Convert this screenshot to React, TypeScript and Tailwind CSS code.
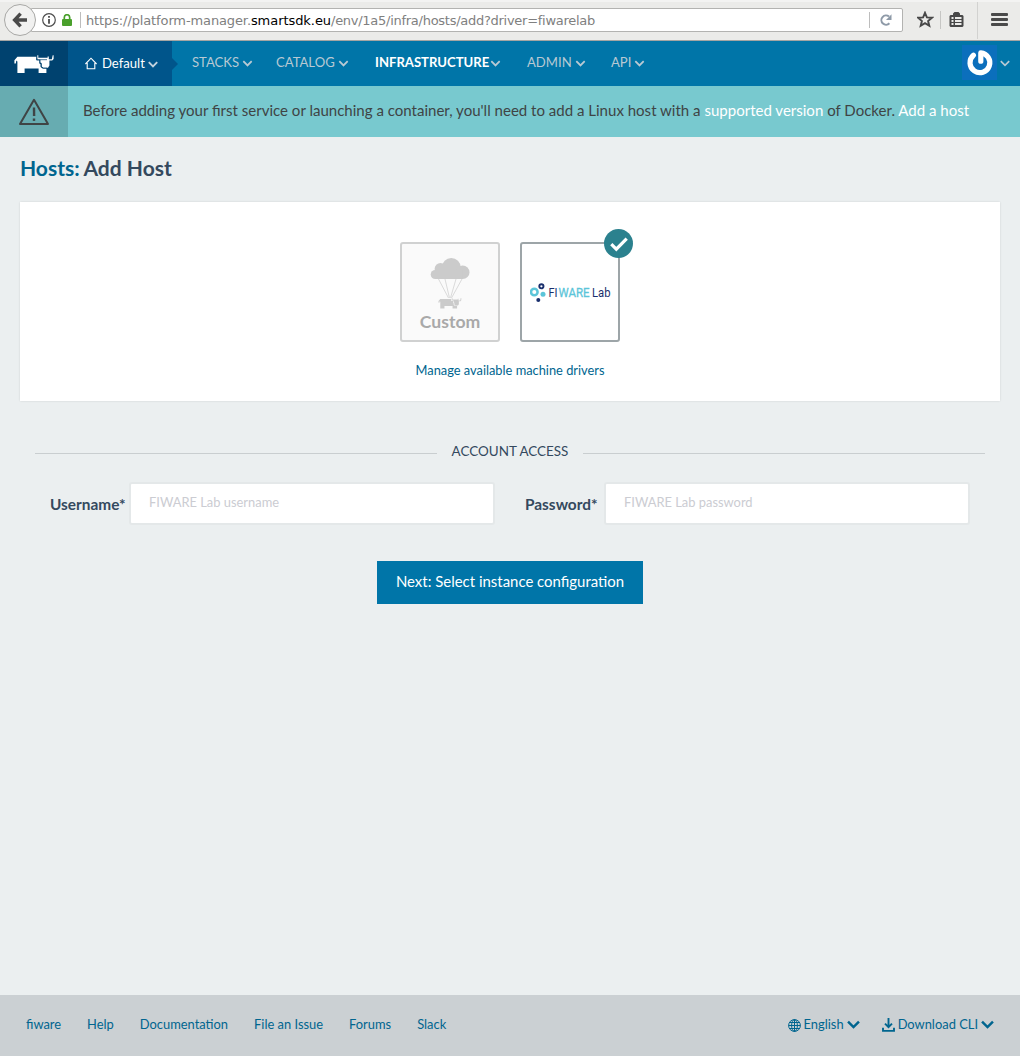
import React from "react";

const Caret = ({ className = "", w = 10, sw = 1.9 }: { className?: string; w?: number; sw?: number }) => (
  <svg className={className} width={w} height={w * 0.7} viewBox="0 0 10 7" fill="none" stroke="currentColor" strokeWidth={sw}>
    <path d="M.8 1.2 5 5.4 9.2 1.2" />
  </svg>
);

const CowShape = () => (
  <>
    <path d="M3.4 1.7H22.3V5.2H25.4V8.6L26.6 9V12L28.6 13.4H32.4V18H24.6V13.6H10.6V18H3.4V6.4L2.3 5.6 1.8 8.4H.4V5.2Z" />
    <path d="M23.3.2H24.3V2.8H33.6V1.4H34.8V4.2H37.8L38.7.2H39.6V4L38.2 5.6H35.4V10.6L34 12.8H29.4L27.6 11.4V8L26.2 7.6V4.4H23.3Z" />
  </>
);

const NavItem = ({ label, className }: { label: string; className: string }) => (
  <div className={"flex items-center whitespace-nowrap " + className}>
    <span>{label}</span>
    <Caret className="ml-[3px] mt-[3px]" w={10} />
  </div>
);

function BrowserBar() {
  return (
    <div className="flex h-[41px] shrink-0 items-start border-b border-[#a5a5a3] border-t-2 border-t-[#f3f3f2] bg-[#ebebe9] pl-1">
      <div className="z-10 mt-[2px] flex h-8 w-8 items-center justify-center rounded-full border border-[#a8a8a6] bg-[#f1f1f0]">
        <svg width="16" height="16" viewBox="0 0 16 16" fill="none" stroke="#4a4a4a" strokeWidth="3.4">
          <path d="M8.6 1.6 2.6 8l6 6.4M3 8h12" />
        </svg>
      </div>
      <div className="-ml-[5px] mt-[6px] flex h-6 w-[872px] items-center rounded-r-[2px] border border-[#b3b3b1] bg-white pl-[10px]">
        <svg width="14" height="14" viewBox="0 0 14 14" fill="none" stroke="#4c4c4c">
          <circle cx="7" cy="7" r="6.3" strokeWidth="1.2" />
          <path d="M7 3v1.8M7 6v4.8" strokeWidth="1.8" />
        </svg>
        <svg className="ml-[6px]" width="10" height="12" viewBox="0 0 10 12">
          <path d="M2.3 6V3.4a2.7 2.7 0 0 1 5.4 0V6" fill="none" stroke="#4aa02c" strokeWidth="1.7" />
          <rect y="5" width="10" height="7" rx="1" fill="#4aa02c" />
        </svg>
        <div className="ml-2 h-4 w-px bg-[#bdbdbd]" />
        <div className="ml-[5px] w-[783px] whitespace-nowrap pt-px font-['DejaVu_Sans',sans-serif] text-[13px] leading-5 tracking-[-0.12px] text-[#808080]">
          https://platform-manager.<span className="tracking-[-0.06px] text-black">smartsdk.eu</span><span className="tracking-[-0.27px]">/env/1a5/infra/hosts/add?driver=fiwarelab</span>
        </div>
        <div className="h-4 w-px bg-[#bdbdbd]" />
        <svg className="ml-[10px]" width="12" height="12" viewBox="0 0 12 12" fill="none" stroke="#8e9aa8" strokeWidth="2">
          <path d="M9.4 9.2A4.6 4.6 0 1 1 9 2.6" />
          <path d="M11.5.3V6H6Z" fill="#8e9aa8" stroke="none" />
        </svg>
      </div>
      <svg className="ml-[14px] mt-[9px]" width="17" height="17" viewBox="0 0 17 17" fill="none" stroke="#484848" strokeWidth="1.9">
        <path d="m8 1.8 1.9 4.6 5 .3-3.8 3.3 1.2 4.8L8 12.2l-4.3 2.6L4.9 10 1.1 6.7l5-.3Z" />
      </svg>
      <div className="ml-[6px] mt-[9px] h-[18px] w-px bg-[#c6c6c4]" />
      <svg className="ml-2 mt-[10px]" width="15" height="16" viewBox="0 0 15 16">
        <path d="M4 3V1.5L5.500 0h4L11 1.500V3H13.500l1 1v10l-1 1H1.500L.5 14V4l1-1Z" fill="#484848" />
        <path d="M2.500 6h2M6 6h6.500M2.500 9h2M6 9h6.500M2.500 12h2M6 12h6.500" stroke="#ebebe9" strokeWidth="1.800" />
      </svg>
      <div className="ml-[13px] h-[37px] w-px bg-[#d2d2d0]" />
      <svg className="ml-[13px] mt-[11px]" width="17" height="13" viewBox="0 0 17 13" fill="#4a4a4a">
        <rect width="17" height="3" rx="1" /><rect y="5" width="17" height="3" rx="1" /><rect y="10" width="17" height="3" rx="1" />
      </svg>
    </div>
  );
}

function Header() {
  return (
    <header className="flex h-[45px] shrink-0 bg-[#0075a8] text-[13.1px] leading-5 text-[#b8c9d3]">
      <div className="w-[68px] bg-[#00426f] pl-[14px] pt-[14px]">
        <svg width="41" height="19" viewBox="0 0 41 19" fill="#fff">
          <CowShape />
          <path d="M22.800 2.500V4.900H25.900V8.300L27.200 8.900V11.600L29.200 13.200H33M26 4.700H33" fill="none" stroke="#00426f" strokeWidth=".7" />
        </svg>
      </div>
      <div className="flex w-[104px] items-center bg-[#00558b] pl-[17px] text-white">
        <svg width="12" height="13" viewBox="0 0 12 13" fill="none" stroke="currentColor" strokeWidth="1.1">
          <path d="M.4 7 6 1.2 11.6 7M2.2 6v5.8h7.6V6" />
        </svg>
        <span className="-mt-[1px] ml-[5px]">Default</span>
        <Caret className="ml-[3px] mt-[2px] text-[#c3d2de]" />
      </div>
      <svg className="mt-[17px]" width="6" height="12" viewBox="0 0 6 12"><path d="M0 0 6 6 0 12Z" fill="#00558b" /></svg>
      <nav className="flex flex-1 pb-[3px] pl-[14px] [&_svg]:translate-x-[0.5px]">
        <NavItem label="STACKS" className="w-[84px]" />
        <NavItem label="CATALOG" className="w-[99px]" />
        <NavItem label="INFRASTRUCTURE" className="w-[152px] font-bold text-white [&>svg]:ml-[1px] [&>svg]:text-[#b8c9d3]" />
        <NavItem label="ADMIN" className="w-[84px]" />
        <NavItem label="API" className="w-[60px]" />
      </nav>
      <div className="mr-[10px] flex items-center">
        <svg className="mb-[3px]" width="35" height="35" viewBox="0 0 35 35" fill="none">
          <rect width="35" height="35" fill="#0b6fbc" />
          <path d="M11.400 10.300A9.900 9.900 0 1 0 18.800 7.900V16.200" stroke="#fff" strokeWidth="5.200" strokeLinecap="round" strokeLinejoin="round" />
        </svg>
        <Caret className="ml-[3px]" w={10} sw={1.7} />
      </div>
    </header>
  );
}

const DriverCustom = () => (
  <div className="flex h-[100px] w-[100px] flex-col items-center rounded-[3px] border-2 border-[#d0d1d1] bg-[#fafafa]">
    <svg className="mt-[13px]" width="40" height="54" viewBox="0 0 40 54" fill="#cbcbcb">
      <circle cx="5.200" cy="17.500" r="4.500" />
      <circle cx="10.500" cy="11.800" r="5.900" />
      <circle cx="21.300" cy="10.300" r="9.400" />
      <circle cx="32.700" cy="15.200" r="6.800" />
      <path d="M5.200 13H32.700V22H5.200Z" />
      <path d="M8.500 22 18.500 41M15 22 19.500 41M26 22 20.500 41M32 22 21.500 41" stroke="#cbcbcb" fill="none" strokeWidth=".7" />
      <g transform="translate(8.300 41) scale(.58)"><CowShape /></g>
    </svg>
    <span className="mt-[1px] text-[17.600px] font-bold leading-[20px] text-[#a9a9a9]">Custom</span>
  </div>
);

const DriverFiware = () => (
  <div className="relative flex h-[100px] w-[100px] rounded-[3px] border-2 border-[#9da5a8] bg-white">
    <svg className="ml-2 mt-[38px]" width="82" height="22" viewBox="0 0 82 22">
      <g fill="none">
        <circle cx="4.300" cy="10" r="3.300" stroke="#5cc5d9" strokeWidth="2.500" />
        <circle cx="11.400" cy="4.300" r="2.100" stroke="#1a2f6d" strokeWidth="1.900" />
      </g>
      <circle cx="13" cy="12.200" r="2.500" fill="#5cc5d9" />
      <circle cx="8.300" cy="17.900" r="2" fill="#1a2f6d" />
      <g fontFamily="Roboto, sans-serif" fontSize="12.500">
        <text x="18.500" y="15" fill="#1a2f6d" textLength="9" lengthAdjust="spacingAndGlyphs">FI</text>
        <text x="28.500" y="15" fill="#5cc5d9" stroke="#5cc5d9" strokeWidth=".3" textLength="31" lengthAdjust="spacingAndGlyphs">WARE</text>
        <text x="62" y="15" fill="#1a2f6d" textLength="18.500" lengthAdjust="spacingAndGlyphs">Lab</text>
      </g>
    </svg>
    <svg className="absolute -right-[15px] -top-[15px]" width="29" height="29" viewBox="0 0 29 29">
      <circle cx="14.5" cy="14.5" r="14.5" fill="#2b818e" />
      <path d="m7.300 15.200 5 5 10.400-10.600" fill="none" stroke="#fff" strokeWidth="3.200" />
    </svg>
  </div>
);

const Field = ({ label, placeholder }: { label: string; placeholder: string }) => (
  <label className="flex w-[475px] items-center pl-[15px]">
    <span className="w-[79px] text-[15.400px] font-bold leading-5">{label}*</span>
    <input
      placeholder={placeholder}
      className="h-[43px] w-[366px] rounded-[3px] border-2 border-[#e4e8e9] bg-white pb-[4px] pl-[18px] text-[12.900px] placeholder:text-[#cbccd2]"
    />
  </label>
);

export default function App() {
  return (
    <div className="flex h-[1056px] w-[1020px] flex-col overflow-hidden bg-[#ebeff0] font-['Lato',sans-serif] text-[#34495e]">
      <BrowserBar />
      <Header />
      <div className="flex h-[51px] shrink-0 bg-[#78c9cf]">
        <div className="flex w-[68px] items-center justify-center bg-[#67acb1]">
          <svg width="32" height="28" viewBox="0 0 32 28" fill="none" stroke="#3f4445" strokeWidth="2" strokeLinejoin="round">
            <path d="M16 1.8 30 26H2Z" />
            <path d="m16 9.5.1 8.5" strokeWidth="2.4" /><path d="M16 20.5v2.4" strokeWidth="2.4" />
          </svg>
        </div>
        <p className="whitespace-nowrap pl-[15px] pt-[14px] text-[15.040px] leading-5 text-[#3f4445]">
          Before adding your first service or launching a container, you'll need to add a Linux host with a <span className="text-white">supported version</span> of Docker. <span className="text-white">Add a host</span>
        </p>
      </div>
      <main className="flex flex-1 flex-col px-5">
        <h1 className="mt-[15px] text-[21px] font-bold leading-8"><span className="text-[#00658f]">Hosts:</span><span className="-ml-[0.5px]"> Add Host</span></h1>
        <section className="mt-[18px] flex h-[199px] flex-col items-center bg-white pt-10 shadow-[0_0_2px_rgba(0,0,0,0.12)]">
          <div className="flex gap-5"><DriverCustom /><DriverFiware /></div>
          <a className="mt-[18px] text-[12.830px] leading-5 text-[#00658f]">Manage available machine drivers</a>
        </section>
        <div className="mx-[15px] mt-[40px] flex h-5 items-center">
          <div className="mt-[5px] h-px flex-1 bg-[#c9ced0]" />
          <span className="px-[15px] text-[13.450px] leading-5">ACCOUNT ACCESS</span>
          <div className="mt-[5px] h-px flex-1 bg-[#c9ced0]" />
        </div>
        <div className="mx-[15px] mt-[21px] flex">
          <Field label="Username" placeholder="FIWARE Lab username" />
          <Field label="Password" placeholder="FIWARE Lab password" />
        </div>
        <button className="mx-auto mt-[36px] h-[43px] w-[266px] whitespace-nowrap bg-[#0075a8] pb-[2px] text-[14.950px] text-white">Next: Select instance configuration</button>
      </main>
      <footer className="flex h-[61px] shrink-0 items-center justify-between bg-[#cbd0d3] pb-[3px] pl-[26px] pr-[26px] text-[12.900px] leading-5 text-[#00658f]">
        <div className="flex gap-[26px]">
          <a>fiware</a><a>Help</a><a>Documentation</a><a>File an Issue</a><a>Forums</a><a>Slack</a>
        </div>
        <div className="flex gap-[22px]">
          <div className="flex items-center">
            <svg className="mt-[3px]" width="13" height="13" viewBox="0 0 13 13" fill="none" stroke="currentColor" strokeWidth="1">
              <circle cx="6.5" cy="6.5" r="5.9" /><ellipse cx="6.5" cy="6.5" rx="2.9" ry="5.9" /><path d="M6.5.5v12M.5 6.5h12M1.5 3.5h10M1.5 9.5h10" />
            </svg>
            <span className="ml-[3px]">English</span><Caret className="ml-[3px] mt-px" w={13} />
          </div>
          <div className="flex items-center">
            <svg className="mt-[2px]" width="13" height="14" viewBox="0 0 13 14" fill="none" stroke="currentColor" strokeWidth="1.9">
              <path d="M6.5 0v8.5M3 5.6l3.5 3.5L10 5.6M1 9.8v3.1h11V9.8" />
            </svg>
            <span className="ml-[3px]">Download CLI</span><Caret className="ml-[3px] mt-px" w={13} />
          </div>
        </div>
      </footer>
    </div>
  );
}
